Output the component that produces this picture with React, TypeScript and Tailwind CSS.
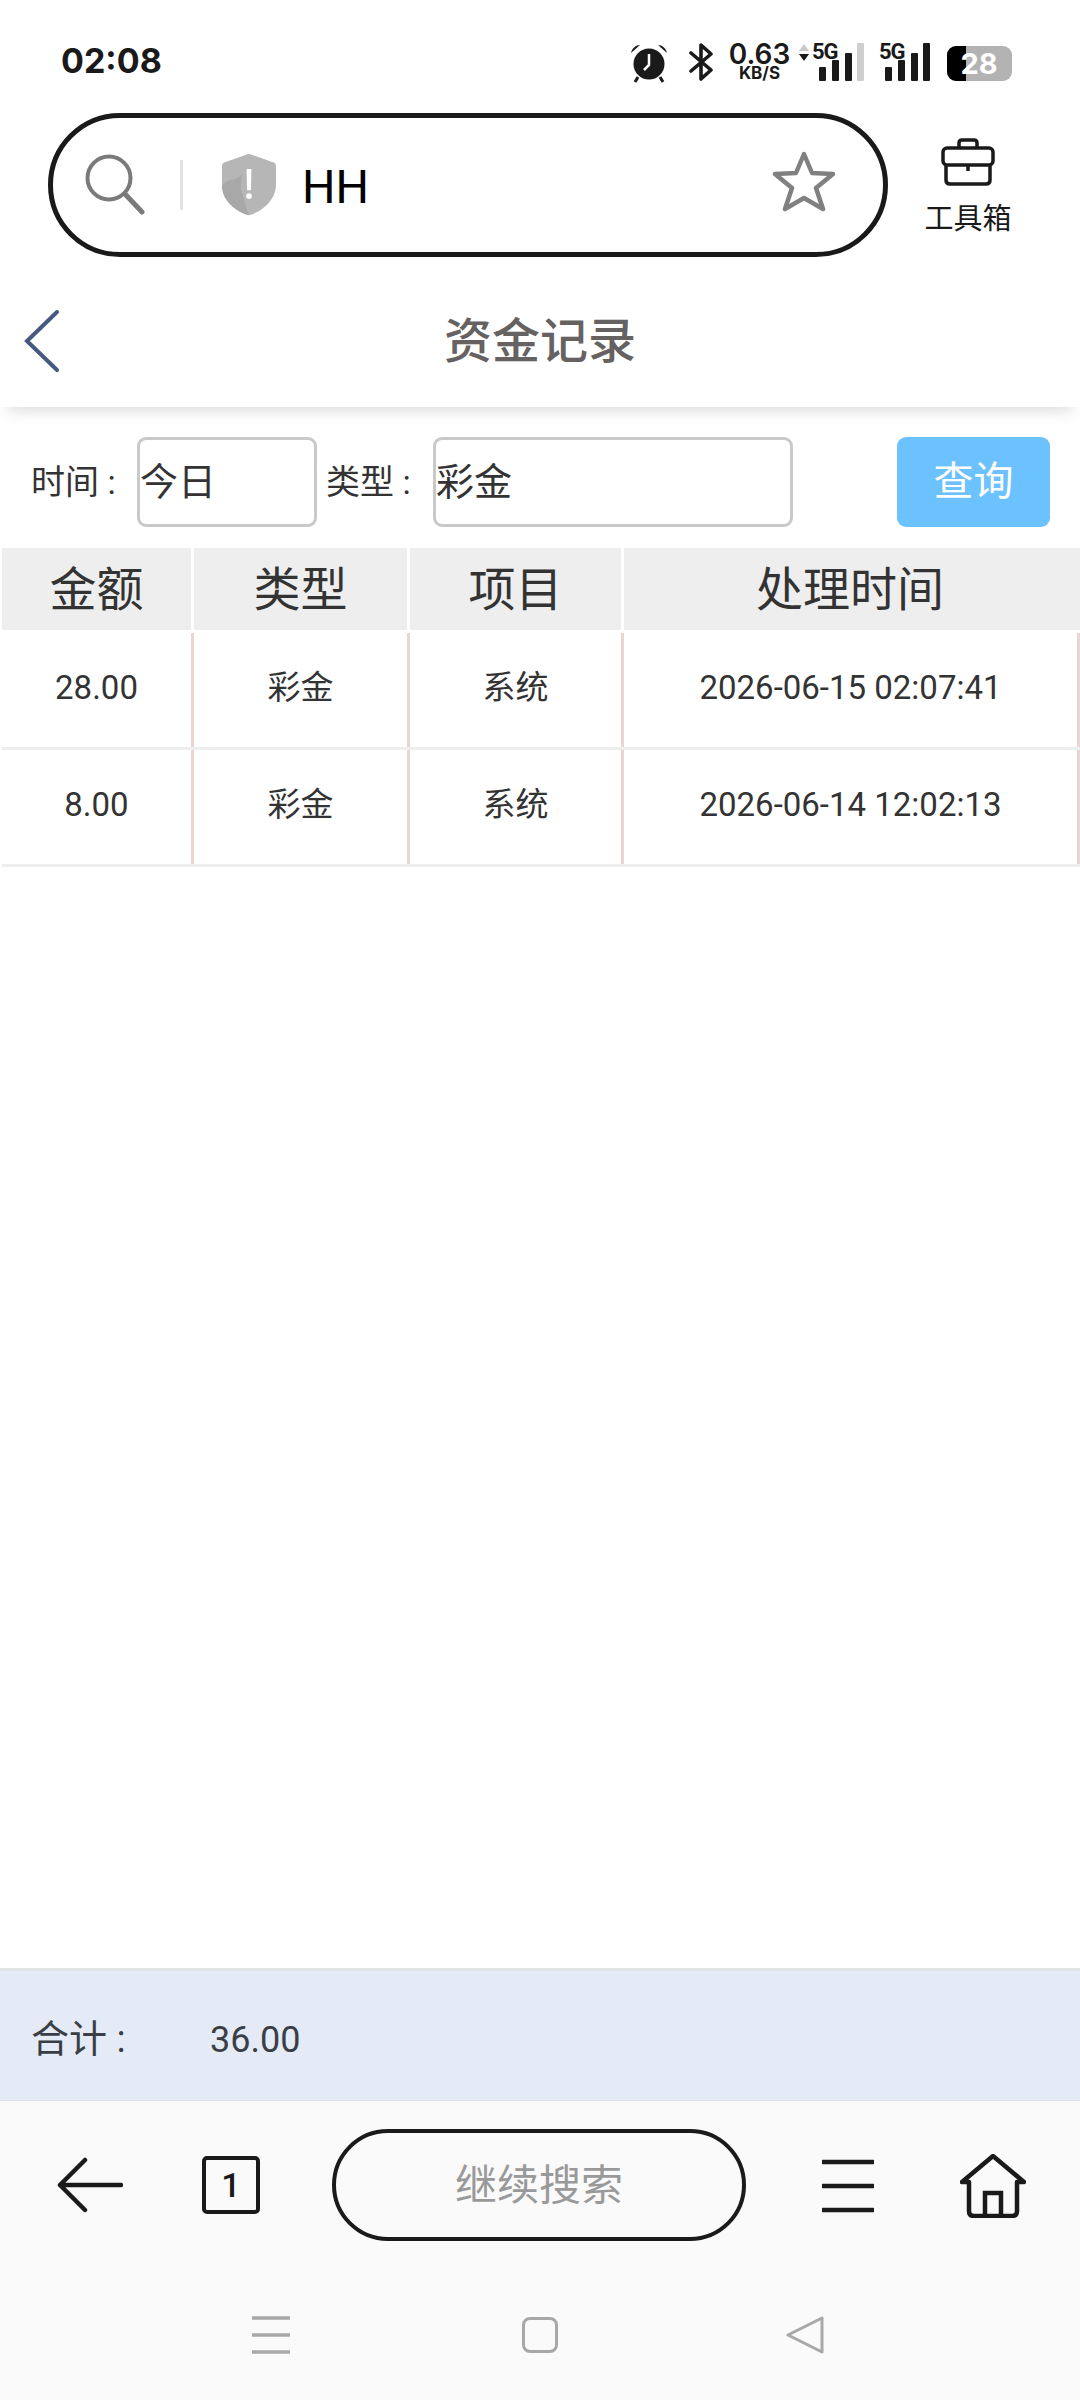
import React from "react";

const cols = "grid grid-cols-[192px_216px_214px_456px] ml-[2px]";

const rows = [
  { amount: "28.00", type: "彩金", item: "系统", time: "2026-06-15 02:07:41" },
  { amount: "8.00", type: "彩金", item: "系统", time: "2026-06-14 12:02:13" },
];

const Signal: React.FC<{ last: string }> = ({ last }) => (
  <svg width="46" height="38" viewBox="0 0 46 38" className="block">
    <rect x="0" y="24" width="7" height="14" rx="1" fill="#1a1a1a" />
    <rect x="13" y="17" width="7" height="21" rx="1" fill="#1a1a1a" />
    <rect x="26" y="10" width="7" height="28" rx="1" fill="#1a1a1a" />
    <rect x="38" y="0" width="7" height="38" rx="1" fill={last} />
  </svg>
);

const StatusBar: React.FC = () => (
  <div className="h-[113px] flex items-start justify-between pl-[61px] pt-[42px] text-[#1a1a1a] shrink-0">
    <div className="text-[34px] leading-[38px] font-bold font-['Inter',sans-serif]">02:08</div>
    <div className="flex items-start mr-[68px] mt-[1px]">
      {/* alarm */}
      <svg width="38" height="40" viewBox="0 0 38 40" className="block -ml-[1px]">
        <circle cx="19" cy="21" r="15.5" fill="#1a1a1a" />
        <path d="M1 10 C2 5 6 2 10 2 Z M37 10 C36 5 32 2 28 2 Z" fill="#1a1a1a" />
        <path d="M8 34 L5 39 M30 34 L33 39" stroke="#1a1a1a" strokeWidth="3" />
        <path d="M19 11 V22 L14 27" stroke="#fff" strokeWidth="2.5" fill="none" />
      </svg>
      {/* bluetooth */}
      <svg width="24" height="38" viewBox="0 0 24 38" className="block ml-[21px]">
        <path d="M2 10 L22 27 L12 36 V2 L22 11 L2 28" stroke="#1a1a1a" strokeWidth="3.6" fill="none" strokeLinejoin="round" strokeLinecap="round" />
      </svg>
      <div className="ml-[16px] w-[61px] flex flex-col items-center font-['Inter',sans-serif] font-semibold">
        <span className="text-[28px] leading-[24px] mt-[-1px]">0.63</span>
        <span className="text-[17px] leading-[15px] font-bold">KB/S</span>
      </div>
      <svg width="12" height="18" viewBox="0 0 12 18" className="block ml-[8px] mt-[1px]">
        <path d="M6 0 L11 7 H1 Z" fill="#c8c8c8" />
        <path d="M6 17 L11 10 H1 Z" fill="#1a1a1a" />
      </svg>
      <div className="relative ml-[2px] w-[52px] h-[38px]">
        <span className="absolute left-0 top-[-1px] text-[22px] leading-[20px] font-bold font-['Roboto',sans-serif] tracking-[-1px]">5G</span>
        <div className="absolute left-[7px] top-0">
          <Signal last="#cfcfcf" />
        </div>
      </div>
      <div className="relative ml-[15px] w-[52px] h-[38px]">
        <span className="absolute left-0 top-[-1px] text-[22px] leading-[20px] font-bold font-['Roboto',sans-serif] tracking-[-1px]">5G</span>
        <div className="absolute left-[6px] top-0">
          <Signal last="#1a1a1a" />
        </div>
      </div>
      {/* battery */}
      <div className="relative ml-[16px] mt-[3px] w-[65px] h-[35px] rounded-[9px] bg-[#b3b3b3] overflow-hidden flex items-center justify-center">
        <div className="absolute left-0 top-0 bottom-0 w-[19px] bg-black" />
        <span className="relative text-white text-[29px] leading-[35px] font-bold font-['Inter',sans-serif] ml-[1px] mr-[2px]">28</span>
      </div>
    </div>
  </div>
);

const SearchRow: React.FC = () => (
  <div className="h-[144px] flex items-center shrink-0 pl-[48px]">
    <div className="w-[840px] h-[144px] rounded-full border-[5px] border-[#1a1a1a] flex items-center pl-[32px] pr-[46px]">
      <svg width="60" height="62" viewBox="0 0 60 62" className="block">
        <circle cx="24" cy="24" r="21.5" stroke="#7a7a7a" strokeWidth="4" fill="none" />
        <path d="M40 40 L57 58" stroke="#7a7a7a" strokeWidth="5" strokeLinecap="round" />
      </svg>
      <div className="w-[3px] h-[50px] bg-[#e2e2e2] ml-[35px]" />
      <svg width="54" height="63" viewBox="0 0 56 64" className="block ml-[39px] -mt-[1px]">
        <path d="M28 0 L53 9 Q56 10 56 13 V32 C56 48 42 60 28 64 C14 60 0 48 0 32 V13 Q0 10 3 9 Z" fill="#b6b6b6" />
        <path d="M0 34 C6 24 14 30 22 20 C16 34 22 44 28 64 C14 60 0 48 0 34 Z" fill="#a8a8a8" />
        <path d="M25.5 16 H30.5 L30 38 H26 Z" fill="#fff" />
        <circle cx="28" cy="44" r="3" fill="#fff" />
      </svg>
      <span className="ml-[26px] mt-[2px] text-[47px] leading-none text-black font-['Roboto',sans-serif]">HH</span>
      <svg width="64" height="62" viewBox="0 0 64 62" className="block ml-auto -mt-[6px] mr-[1px]">
        <path d="M32 3 L40 22 L61 23 L44 37 L51 58 L32 47 L13 58 L20 37 L3 23 L24 22 Z" stroke="#808080" strokeWidth="4.5" fill="none" strokeLinejoin="round" />
      </svg>
    </div>
    <div className="ml-[36px] w-[88px] flex flex-col items-center">
      <svg width="54" height="48" viewBox="0 0 54 48" className="block">
        <path d="M18 10 V5 Q18 2 21 2 H33 Q36 2 36 5 V10" stroke="#1a1a1a" strokeWidth="3.5" fill="none" />
        <rect x="2" y="10" width="50" height="17" rx="4" stroke="#1a1a1a" strokeWidth="3.5" fill="none" />
        <path d="M5 27 V42 Q5 46 9 46 H45 Q49 46 49 42 V27" stroke="#1a1a1a" strokeWidth="3.5" fill="none" />
        <path d="M27 27 V33" stroke="#1a1a1a" strokeWidth="3.5" />
      </svg>
      <span className="mt-[13px] text-[29px] leading-[34px] whitespace-nowrap text-[#1a1a1a] font-['Noto_Sans_CJK_SC',sans-serif]">工具箱</span>
    </div>
  </div>
);

const App: React.FC = () => {
  return (
    <div className="w-[1080px] h-[2400px] flex flex-col bg-white overflow-hidden font-['Roboto','Noto_Sans_CJK_SC',sans-serif]">
      <StatusBar />
      <SearchRow />

      {/* Title bar */}
      <div className="relative h-[150px] shrink-0 flex items-center justify-center pt-[18px] shadow-[0_12px_14px_-8px_rgba(0,0,0,0.14)]">
        <svg width="36" height="64" viewBox="0 0 36 64" className="absolute left-[24px] top-[52px]">
          <path d="M33 3 L3 32 L33 61" stroke="#46597f" strokeWidth="4" fill="none" strokeLinecap="round" />
        </svg>
        <span className="text-[48px] leading-none font-medium text-[#666262] mt-[1px]">资金记录</span>
      </div>

      {/* Filter */}
      <div className="mt-[30px] h-[90px] shrink-0 flex items-center pl-[31px] pr-[30px] text-[34px] text-[#333]">
        <span className="whitespace-nowrap w-[106px]">时间 :</span>
        <div className="w-[180px] h-[90px] rounded-[9px] border-[3px] border-[#c9c9c9] flex items-center text-[38px]">今日</div>
        <span className="ml-[9px] whitespace-nowrap w-[107px]">类型 :</span>
        <div className="w-[360px] h-[90px] rounded-[9px] border-[3px] border-[#c9c9c9] flex items-center text-[38px]">彩金</div>
        <div className="ml-auto w-[153px] h-[90px] rounded-[9px] bg-[#6cc1ff] flex items-center justify-center text-white text-[40px]">查询</div>
      </div>

      {/* Table */}
      <div className="mt-[21px] shrink-0">
        <div className={`${cols} h-[82px] text-[47px] text-[#333]`}>
          {["金额", "类型", "项目", "处理时间"].map((h, i) => (
            <div key={i} className={`bg-[#eeeeee] flex items-center justify-center pt-[2px] ${i < 3 ? "mr-[3px]" : "pr-[4px]"}`}>
              {h}
            </div>
          ))}
        </div>
        <div className="mt-[3px]">
          {rows.map((r, i) => (
            <div key={i} className={`${cols} h-[114px] border-b-[3px] border-[#eeeeee] box-content`}>
              {[r.amount, r.type, r.item, r.time].map((v, j) => (
                <div key={j} className="flex items-center justify-center pb-[4px] text-[33px] text-[#333] border-r-[3px] border-[#ecd4d4]">
                  {v}
                </div>
              ))}
            </div>
          ))}
        </div>
      </div>

      <div className="flex-1" />

      {/* Total */}
      <div className="h-[133px] shrink-0 border-t-[3px] border-b-[1px] border-t-[#e0e4e8] border-b-[#dcdfe6] bg-[#e4ebf6] flex items-center pl-[31px] pt-[8px] text-[#3a3f47]">
        <span className="w-[179px] text-[38px]">合计 :</span>
        <span className="text-[36px]">36.00</span>
      </div>

      {/* Browser bar */}
      <div className="h-[299px] shrink-0 bg-[#fafafa] flex flex-col">
        <div className="mt-[28px] h-[112px] flex items-center">
          <svg width="66" height="56" viewBox="0 0 66 56" className="block ml-[57px]">
            <path d="M64 28 H3 M28 3 L3 28 L28 53" stroke="#1a1a1a" strokeWidth="4.5" fill="none" strokeLinecap="round" strokeLinejoin="round" />
          </svg>
          <div className="ml-[79px] w-[58px] h-[58px] rounded-[5px] border-[4px] border-[#1a1a1a] flex items-center justify-center text-[34px] font-medium text-[#1a1a1a]">1</div>
          <div className="ml-[72px] w-[414px] h-[112px] rounded-full border-[4px] border-[#1a1a1a] flex items-center justify-center text-[42px] text-[#999]">继续搜索</div>
          <svg width="52" height="54" viewBox="0 0 52 54" className="block ml-[76px] mt-[2px]">
            <path d="M1 3 H51 M1 27 H51 M1 51 H51" stroke="#1a1a1a" strokeWidth="4.5" strokeLinecap="round" />
          </svg>
          <svg width="66" height="64" viewBox="0 0 66 64" className="block ml-[86px] mt-[2px]">
            <path d="M2 28 L33 2 L64 28 H57 V57 Q57 62 52 62 H14 Q9 62 9 57 V28 Z" stroke="#1a1a1a" strokeWidth="4.5" fill="none" strokeLinejoin="round" />
            <path d="M25 62 V39 H41 V62" stroke="#1a1a1a" strokeWidth="4.5" fill="none" />
          </svg>
        </div>
        <div className="mt-[75px] h-[38px] flex items-center">
          <svg width="38" height="38" viewBox="0 0 38 38" className="block ml-[252px]">
            <path d="M0 2 H38 M0 19 H38 M0 36 H38" stroke="#a8a8a8" strokeWidth="3.5" />
          </svg>
          <div className="ml-[232px] w-[36px] h-[36px] rounded-[8px] border-[3px] border-[#a8a8a8]" />
          <svg width="38" height="38" viewBox="0 0 38 38" className="block ml-[228px]">
            <path d="M36 2 V36 L2 19 Z" stroke="#a8a8a8" strokeWidth="3" fill="none" strokeLinejoin="round" />
          </svg>
        </div>
      </div>
    </div>
  );
};

export default App;
